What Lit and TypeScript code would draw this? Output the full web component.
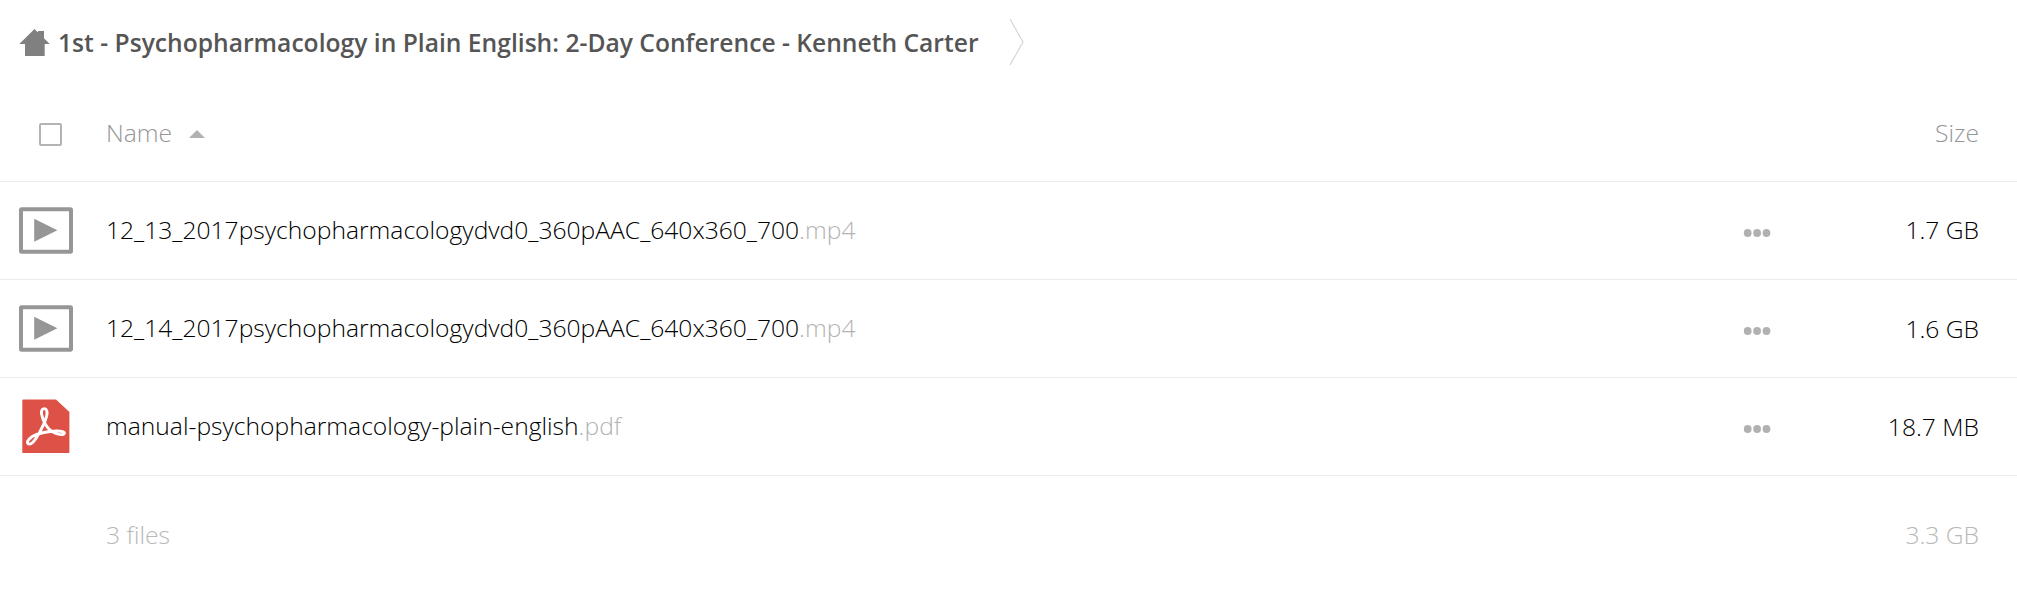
import { LitElement, html, css } from "lit";
import { customElement, property } from "lit/decorators.js";

const videoIcon = html`<svg width="54" height="47" viewBox="0 0 54 47">
  <rect x="2" y="2.2" width="50" height="42.5" rx="0.6" fill="#fff" stroke="#969696" stroke-width="4"/>
  <path d="M15.2 11.8 38.4 23.3 15.2 34.8Z" fill="#969696"/></svg>`;

const pdfIcon = html`<svg width="54" height="55" viewBox="0 0 54 55">
  <path d="M4.2 .6H37L50.4 13V53.2a.9.9 0 0 1-.9.9H4.2a.9.9 0 0 1-.9-.9V1.5a.9.9 0 0 1 .9-.9Z" fill="#de5147"/>
  <path d="M25 9.600C20.700 9.800 22.200 18.500 27 26.200C32 34 41 37 45 34.900C47 33.200 42 31.700 37 32C28 32.600 18 34.500 13 37.800C9 40.500 7 44 9.500 45C12.500 46.200 17 40 20.500 33.500C24 27 28.800 16.500 28 12.700C27.400 10.300 26.300 9.500 25 9.600Z" fill="none" stroke="#fff" stroke-width="2.9" stroke-linejoin="round"/></svg>`;

interface FileItem { name: string; ext: string; size: string; kind: "video" | "pdf"; }

@customElement("file-row")
export class FileRow extends LitElement {
  @property({ attribute: false }) file!: FileItem;

  static styles = css`
    :host { display: grid; grid-template-columns: 106px 1fr 200px 128px; box-sizing: border-box;
      height: 98px; padding-right: 38px; align-items: center; border-bottom: 1px solid #ebebeb; line-height: 34px; }
    .icon { padding-left: 19px; display: flex; }
    :host(:first-of-type) .icon { padding-bottom: 1px; }
    .name { color: #000; white-space: nowrap; padding-bottom: 1px; }
    .ext { color: #b3b3b3; }
    .dots { display: flex; justify-content: flex-start; padding: 4px 0 0 92px; }
    .size { text-align: right; color: #000; padding-top: 1px; }
    :host(:first-of-type) .size { padding: 0 0 1px; }
  `;

  render() {
    return html`<div class="icon">${this.file.kind === "pdf" ? pdfIcon : videoIcon}</div>
      <div class="name">${this.file.name}<span class="ext">${this.file.ext}</span></div>
      <div class="dots"><svg width="28" height="10" viewBox="0 0 28 10" fill="#b1b1b1">
        <circle cx="4.700" cy="5" r="3.900"/><circle cx="14.100" cy="5" r="3.900"/><circle cx="23.500" cy="5" r="3.900"/></svg></div>
      <div class="size">${this.file.size}</div>`;
  }
}

@customElement("app-root")
export class AppRoot extends LitElement {
  files: FileItem[] = [
    { name: "12_13_2017psychopharmacologydvd0_360pAAC_640x360_700", ext: ".mp4", size: "1.7 GB", kind: "video" },
    { name: "12_14_2017psychopharmacologydvd0_360pAAC_640x360_700", ext: ".mp4", size: "1.6 GB", kind: "video" },
    { name: "manual-psychopharmacology-plain-english", ext: ".pdf", size: "18.7 MB", kind: "pdf" },
  ];

  static styles = css`
    :host { display: block; height: 594px; overflow: hidden; background: #fff;
      font: 300 24.64px/34px "Open Sans", sans-serif; }
    .crumbs { display: flex; height: 84px; align-items: center; padding-left: 19px; box-sizing: border-box; }
    .title { margin-left: 7px; padding-top: 2px; font-weight: 600; color: #555; white-space: nowrap; }
    .sep { margin-left: 30px; }
    .head, .foot { display: grid; grid-template-columns: 106px 1fr auto; padding-right: 38px; box-sizing: border-box; align-items: center; }
    .head { height: 98px; color: #969696; border-bottom: 1px solid #ebebeb; padding-top: 1px; }
    .check { box-sizing: border-box; width: 23px; height: 23px; margin: 3px 0 0 39px; border: 2px solid #b3b3b3; border-radius: 2px; }
    .label { display: flex; align-items: center; gap: 17px; }
    .arrow { margin-top: 2px; }
    .foot { height: 118px; color: #b8b8b8; }
  `;

  render() {
    return html`
      <div class="crumbs">
        <svg width="32" height="30" viewBox="0 0 32 30"><path d="M.3 17 15.500 2 19 5.500V4h6v7.200L30.700 17H25.700V29H6V17Z" fill="#808080"/></svg>
        <span class="title">1st - Psychopharmacology in Plain English: 2-Day Conference - Kenneth Carter</span>
        <svg class="sep" width="16" height="48" viewBox="0 0 16 48"><path d="M1 1 14 24 1 47" fill="none" stroke="#d4d4d4" stroke-width="1.2"/></svg>
      </div>
      <div class="head">
        <span class="check"></span>
        <span class="label">Name <svg class="arrow" width="16" height="8" viewBox="0 0 16 8"><path d="M0 8 8 0 16 8Z" fill="#b1b1b1"/></svg></span>
        <span>Size</span>
      </div>
      ${this.files.map((f) => html`<file-row .file=${f}></file-row>`)}
      <div class="foot"><span></span><span>3 files</span><span>3.3 GB</span></div>`;
  }
}
